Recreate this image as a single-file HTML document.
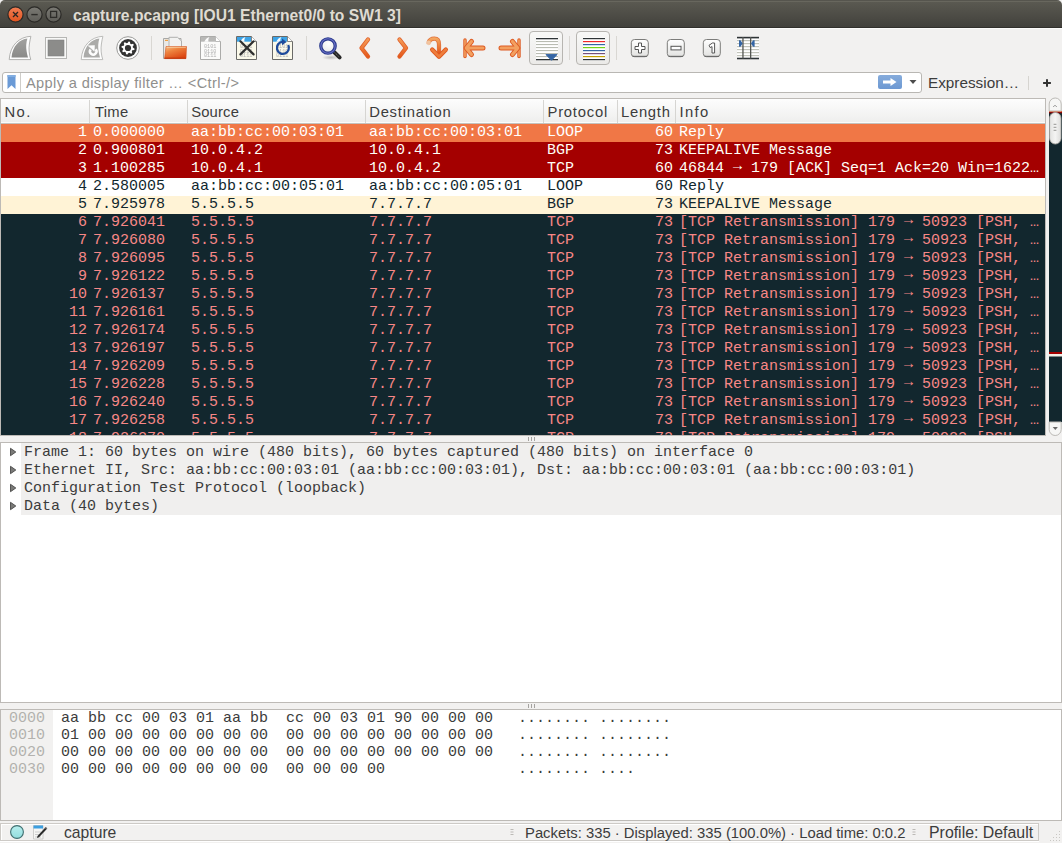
<!DOCTYPE html><html><head><meta charset="utf-8"><style>
*{margin:0;padding:0;box-sizing:border-box}
html,body{width:1062px;height:843px;overflow:hidden;background:#f2f1f0}
body{position:relative;font-family:"Liberation Sans",sans-serif;color:#3c3c3c}
.a{position:absolute}
.mono{font-family:"Liberation Mono",monospace;font-size:15px;white-space:pre}
.ui{font-family:"Liberation Sans",sans-serif;white-space:pre}
svg{position:absolute;overflow:visible}
</style></head><body>
<div class="a" style="left:0;top:0;width:1062px;height:28px;border-radius:5px 5px 0 0;background:linear-gradient(#56554e 0px,#56554e 1px,#68675e 1px,#68675e 2px,#5a5951 2px,#42413c 27px)"></div>
<div class="a" style="left:0;top:27px;width:1062px;height:1px;background:#31302c"></div>
<div class="a" style="left:0;top:28px;width:1062px;height:1px;background:#fbfbfa"></div>
<svg style="left:0;top:0" width="70" height="28">
<defs>
<linearGradient id="gc" x1="0" y1="0" x2="0" y2="1"><stop offset="0" stop-color="#f27e54"/><stop offset="1" stop-color="#e2541f"/></linearGradient>
<linearGradient id="gg" x1="0" y1="0" x2="0" y2="1"><stop offset="0" stop-color="#7b7a74"/><stop offset="1" stop-color="#5e5d58"/></linearGradient>
</defs>
<circle cx="15.5" cy="14.5" r="7.6" fill="url(#gc)" stroke="#2b2a27" stroke-width="1.2"/>
<path d="M13 12 L18 17 M18 12 L13 17" stroke="#2a2522" stroke-width="1.3"/>
<circle cx="34.5" cy="14.5" r="7.6" fill="url(#gg)" stroke="#2b2a27" stroke-width="1.2"/>
<path d="M31.3 14.6 H37.7" stroke="#2e2d2a" stroke-width="1.4"/>
<circle cx="53.5" cy="14.5" r="7.6" fill="url(#gg)" stroke="#2b2a27" stroke-width="1.2"/>
<rect x="50.6" y="11.4" width="6" height="6" fill="none" stroke="#2e2d2a" stroke-width="1.3"/>
</svg>
<div class="a ui" style="left:73px;top:6.5px;font-size:15.67px;font-weight:bold;color:#dfdbd2;line-height:18px">capture.pcapng [IOU1 Ethernet0/0 to SW1 3]</div>
<svg style="left:8px;top:36px" width="24" height="24">
<defs><linearGradient id="fin1" x1="0" y1="0" x2="0" y2="1"><stop offset="0" stop-color="#a2a2a0"/><stop offset="1" stop-color="#8a8a88"/></linearGradient></defs>
<path d="M1.2,23.6 H22.8 C21.2,19 20.6,13 21.4,8 C21.8,5 22.4,2.5 22.9,0.3 C11.5,0.8 2,9 1.2,23.6 Z" fill="#fdfdfd" stroke="#b2b2b0" stroke-width="1"/>
<path d="M3.5,21.4 H20 C18.8,17 18,13 18.2,9 C18.4,6.5 18.8,4.5 19.4,2.6 C11.5,3.3 4.6,10 3.5,21.4 Z" fill="url(#fin1)"/>
</svg>
<svg style="left:44px;top:36px" width="24" height="24">
<rect x="1.5" y="1.5" width="21" height="21" fill="#f9f9f8" stroke="#b6b6b4" stroke-width="1"/>
<rect x="4" y="4" width="16" height="16" fill="#8c8c8a" stroke="#808080" stroke-width="0.6"/>
</svg>
<svg style="left:80px;top:36px" width="24" height="24">
<path d="M1.2,23.6 H22.8 C21.2,19 20.6,13 21.4,8 C21.8,5 22.4,2.5 22.9,0.3 C11.5,0.8 2,9 1.2,23.6 Z" fill="#fdfdfd" stroke="#bcbcba" stroke-width="1"/>
<path d="M3.5,21.4 H20 C18.8,17 18,13 18.2,9 C18.4,6.5 18.8,4.5 19.4,2.6 C11.5,3.3 4.6,10 3.5,21.4 Z" fill="#ababa9"/>
<path d="M15.69,13.21 A3.25,3.25 0 1 1 10.54,13.44" fill="none" stroke="#fdfdfd" stroke-width="2.5"/>
<path d="M8.2,9.8 L14.5,9.5 L14.3,15.3 Z" fill="#fdfdfd" stroke="#fdfdfd" stroke-width="0.5" stroke-linejoin="round"/>
</svg>
<svg style="left:116px;top:36px" width="24" height="24">
<circle cx="12" cy="12" r="11.3" fill="#fcfcfc" stroke="#9c9c9a" stroke-width="1"/>
<circle cx="12" cy="12" r="8.9" fill="#333333"/>
<path d="M12.65,5.43 L13.92,5.68 L14.31,7.68 L15.11,8.21 L17.10,7.81 L17.82,8.89 L16.69,10.58 L16.88,11.52 L18.57,12.65 L18.32,13.92 L16.32,14.31 L15.79,15.11 L16.19,17.10 L15.11,17.82 L13.42,16.69 L12.48,16.88 L11.35,18.57 L10.08,18.32 L9.69,16.32 L8.89,15.79 L6.90,16.19 L6.18,15.11 L7.31,13.42 L7.12,12.48 L5.43,11.35 L5.68,10.08 L7.68,9.69 L8.21,8.89 L7.81,6.90 L8.89,6.18 L10.58,7.31 L11.52,7.12 Z" fill="#ffffff"/>
<circle cx="12" cy="12" r="3.1" fill="#333333"/>
</svg>
<div class="a" style="left:151px;top:36px;width:1px;height:24px;background:#d9d7d3"></div>
<div class="a" style="left:306px;top:36px;width:1px;height:24px;background:#d9d7d3"></div>
<div class="a" style="left:569px;top:36px;width:1px;height:24px;background:#d9d7d3"></div>
<div class="a" style="left:616px;top:36px;width:1px;height:24px;background:#d9d7d3"></div>
<svg style="left:162px;top:36px" width="26" height="24">
<defs><linearGradient id="fold" x1="0" y1="0" x2="0.6" y2="1"><stop offset="0" stop-color="#f6c58c"/><stop offset="0.4" stop-color="#ee8440"/><stop offset="1" stop-color="#dc4612"/></linearGradient>
<linearGradient id="fback" x1="0" y1="0" x2="1" y2="0"><stop offset="0" stop-color="#e6e6e4"/><stop offset="1" stop-color="#fafafa"/></linearGradient></defs>
<path d="M1.5,2.5 H19 V22.5 H1.5 Z" fill="url(#fback)" stroke="#a8a8a6" stroke-width="1"/>
<path d="M3,4.4 H6" stroke="#f0a040" stroke-width="1.2"/>
<path d="M7,1.3 H15.5 L19.5,5 V16 H7 Z" fill="#f2f2f1" stroke="#b0b0ae" stroke-width="1"/>
<path d="M4,10.5 H24.5 L24,22.6 H2.6 Z" fill="url(#fold)" stroke="#d3501e" stroke-width="0.6"/>
<path d="M4.6,11.3 H23.8" stroke="#fbd9b0" stroke-width="0.9" opacity="0.8"/>
<path d="M2.6,22.2 H24" stroke="#c2380e" stroke-width="1.2"/>
</svg>
<svg style="left:200px;top:36px" width="22" height="24">
<path d="M0.5,0.5 H15.5 L20.5,5.5 V23.5 H0.5 Z" fill="#fbfbfa" stroke="#ababa9" stroke-width="1"/>
<path d="M1,1 H15.3 V5.7 H1 Z" fill="#b8b8b6"/>
<path d="M4.3,5.8 C5.3,3.2 6.9,1.6 9.4,0.9 C8.4,2.5 8.1,4 8.5,5.8 Z" fill="#ffffff" opacity="0.95"/>
<path d="M15.5,0.5 V5.5 H20.5" fill="#ffffff" stroke="#ababa9" stroke-width="0.8"/>
<g font-family="Liberation Mono" font-size="5.2" fill="#b0b0ac" style="filter:grayscale(1)"><text x="4" y="12">0101</text><text x="4" y="16.5">0110</text><text x="4" y="21">0111</text></g>

</svg>
<svg style="left:236px;top:36px" width="22" height="24">
<path d="M0.5,0.5 H15.5 L20.5,5.5 V23.5 H0.5 Z" fill="#fbf9ea" stroke="#6a6a68" stroke-width="1"/>
<path d="M1,1 H15.3 V5.7 H1 Z" fill="#3da3e6"/>
<path d="M4.3,5.8 C5.3,3.2 6.9,1.6 9.4,0.9 C8.4,2.5 8.1,4 8.5,5.8 Z" fill="#ffffff" opacity="0.95"/>
<path d="M15.5,0.5 V5.5 H20.5" fill="#ffffff" stroke="#6a6a68" stroke-width="0.8"/>
<g font-family="Liberation Mono" font-size="5.2" fill="#b0b0ac" style="filter:grayscale(1)"><text x="4" y="12">0101</text><text x="4" y="16.5">0110</text><text x="4" y="21">0111</text></g>
<path d="M4.4,5.3 L17.6,18.4 M17.6,5.3 L4.4,18.4" stroke="#2f2f2f" stroke-width="2.2" stroke-linecap="round"/>
</svg>
<svg style="left:272px;top:36px" width="22" height="24">
<path d="M0.5,0.5 H15.5 L20.5,5.5 V23.5 H0.5 Z" fill="#fbf9ea" stroke="#6a6a68" stroke-width="1"/>
<path d="M1,1 H15.3 V5.7 H1 Z" fill="#3da3e6"/>
<path d="M4.3,5.8 C5.3,3.2 6.9,1.6 9.4,0.9 C8.4,2.5 8.1,4 8.5,5.8 Z" fill="#ffffff" opacity="0.95"/>
<path d="M15.5,0.5 V5.5 H20.5" fill="#ffffff" stroke="#6a6a68" stroke-width="0.8"/>
<g font-family="Liberation Mono" font-size="5.2" fill="#b0b0ac" style="filter:grayscale(1)"><text x="4" y="12">0101</text><text x="4" y="16.5">0110</text><text x="4" y="21">0111</text></g>
<path d="M16.2,9 A6,6 0 1 1 10.5,5.9" fill="none" stroke="#1f4b9b" stroke-width="2.3"/><path d="M10,2.6 L14.6,5.9 L10,9.2 Z" fill="#1f4b9b"/>
</svg>
<svg style="left:316px;top:35px" width="28" height="26">
<defs><radialGradient id="lens" cx="0.55" cy="0.35" r="0.7"><stop offset="0" stop-color="#ffffff"/><stop offset="1" stop-color="#e6e6e6"/></radialGradient>
<radialGradient id="shad" cx="0.5" cy="0.5" r="0.5"><stop offset="0" stop-color="#000" stop-opacity="0.22"/><stop offset="1" stop-color="#000" stop-opacity="0"/></radialGradient></defs>
<ellipse cx="15" cy="22.5" rx="9" ry="2.5" fill="url(#shad)"/>
<path d="M18.3,17.3 L23.6,22.4" stroke="#262626" stroke-width="4" stroke-linecap="round"/>
<path d="M18.8,17.6 L23.3,22" stroke="#8a8a80" stroke-width="1" stroke-dasharray="1 1"/>
<circle cx="12" cy="11" r="7.2" fill="url(#lens)" stroke="#2a3a8c" stroke-width="3.3"/>
<circle cx="12" cy="11" r="7.2" fill="none" stroke="#6a70c6" stroke-width="1.1"/>
</svg>
<svg style="left:356px;top:36px" width="18" height="24">
<defs><linearGradient id="och" x1="0" y1="0" x2="0" y2="1"><stop offset="0" stop-color="#f59a56"/><stop offset="1" stop-color="#e55a1c"/></linearGradient></defs>
<path d="M12,3.5 L5.5,12 L12,20.5" fill="none" stroke="#df5f28" stroke-width="4.3" stroke-linecap="round" stroke-linejoin="round"/>
<path d="M12,3.5 L5.5,12 L12,20.5" fill="none" stroke="url(#och)" stroke-width="2.7" stroke-linecap="round" stroke-linejoin="round"/>
</svg>
<svg style="left:394px;top:36px" width="18" height="24">
<path d="M5.5,3.5 L12,12 L5.5,20.5" fill="none" stroke="#df5f28" stroke-width="4.3" stroke-linecap="round" stroke-linejoin="round"/>
<path d="M5.5,3.5 L12,12 L5.5,20.5" fill="none" stroke="url(#och)" stroke-width="2.7" stroke-linecap="round" stroke-linejoin="round"/>
</svg>
<svg style="left:424px;top:34px" width="26" height="26">
<defs><linearGradient id="oca" x1="0" y1="0" x2="0" y2="1"><stop offset="0" stop-color="#f4a660"/><stop offset="1" stop-color="#e4581c"/></linearGradient></defs>
<path d="M4.6,8.6 C5.5,5.5 8,4.6 10.4,4.6 C13.5,4.6 15,7 15,10.5 V19" fill="none" stroke="#e06a30" stroke-width="4.2" stroke-linecap="round" opacity="0.95"/>
<path d="M4.6,8.6 C5.5,5.5 8,4.6 10.4,4.6 C13.5,4.6 15,7 15,10.5 V19" fill="none" stroke="url(#oca)" stroke-width="2.6" stroke-linecap="round"/>
<circle cx="4.6" cy="8.8" r="2.4" fill="#f2d2b4" opacity="0.8"/>
<path d="M8.2,15.6 L15,22.6 L21.8,15.6" fill="none" stroke="#e05a20" stroke-width="4.4" stroke-linecap="round" stroke-linejoin="round"/>
<path d="M8.2,15.6 L15,22.6 L21.8,15.6" fill="none" stroke="#ee7e3c" stroke-width="2.6" stroke-linecap="round" stroke-linejoin="round"/>
</svg>
<svg style="left:460px;top:36px" width="28" height="24">
<path d="M5,4 V20.5" stroke="#dd5a22" stroke-width="3.4" stroke-linecap="round"/>
<path d="M5,4 V20.5" stroke="#f4a060" stroke-width="1.6" stroke-linecap="round"/>
<path d="M11.5,5.5 L6.2,12 L11.5,18.5 M6.5,12 H23" fill="none" stroke="#dd5a22" stroke-width="5" stroke-linecap="round" stroke-linejoin="round"/>
<path d="M11.5,5.5 L6.2,12 L11.5,18.5 M6.5,12 H23" fill="none" stroke="#f3a060" stroke-width="3.1" stroke-linecap="round" stroke-linejoin="round"/>
</svg>
<svg style="left:496px;top:36px" width="28" height="24">
<path d="M23,4 V20.5" stroke="#dd5a22" stroke-width="3.4" stroke-linecap="round"/>
<path d="M23,4 V20.5" stroke="#f4a060" stroke-width="1.6" stroke-linecap="round"/>
<path d="M16.5,5.5 L21.8,12 L16.5,18.5 M21.5,12 H5" fill="none" stroke="#dd5a22" stroke-width="5" stroke-linecap="round" stroke-linejoin="round"/>
<path d="M16.5,5.5 L21.8,12 L16.5,18.5 M21.5,12 H5" fill="none" stroke="#f3a060" stroke-width="3.1" stroke-linecap="round" stroke-linejoin="round"/>
</svg>
<div class="a" style="left:529px;top:31px;width:34px;height:34px;border:1px solid #b7b5b1;border-radius:4px;background:linear-gradient(#f8f8f7,#ebeae8)"></div>
<svg style="left:535px;top:36px" width="24" height="26"><rect x="1" y="1.5" width="22" height="23" fill="#ffffff"/><rect x="1" y="2" width="22" height="1.3" fill="#2e3436"/><rect x="1" y="5" width="22" height="1.1" fill="#b9bcb2"/><rect x="1" y="8" width="22" height="1.1" fill="#b9bcb2"/><rect x="1" y="11" width="22" height="1.1" fill="#b9bcb2"/><rect x="1" y="14" width="22" height="1.1" fill="#b9bcb2"/><rect x="1" y="17" width="22" height="1.1" fill="#b9bcb2"/><rect x="1" y="20" width="22" height="1.1" fill="#b9bcb2"/><rect x="1" y="23" width="22" height="1.3" fill="#2e3436"/><path d="M11,18.6 H22 L16.5,24.3 Z" fill="#3465a4" stroke="#3465a4" stroke-width="1" stroke-linejoin="round"/></svg>
<div class="a" style="left:576px;top:31px;width:34px;height:34px;border:1px solid #b7b5b1;border-radius:4px;background:linear-gradient(#f8f8f7,#ebeae8)"></div>
<svg style="left:582px;top:36px" width="24" height="26"><rect x="1" y="1.5" width="22" height="23" fill="#ffffff"/><rect x="1" y="2" width="22" height="1.2" fill="#2e3436"/><rect x="1" y="5" width="22" height="1.2" fill="#ef2929"/><rect x="1" y="8" width="22" height="1.2" fill="#3465a4"/><rect x="1" y="11" width="22" height="1.2" fill="#73d216"/><rect x="1" y="14" width="22" height="1.2" fill="#3465a4"/><rect x="1" y="17" width="22" height="1.2" fill="#75507b"/><rect x="1" y="20" width="22" height="1.2" fill="#c4a000"/><rect x="1" y="23" width="22" height="1.2" fill="#2e3436"/></svg>
<svg style="left:630px;top:38px" width="20" height="20">
<defs><linearGradient id="zb630" x1="0" y1="0" x2="0" y2="1"><stop offset="0" stop-color="#ffffff"/><stop offset="1" stop-color="#e2e2e0"/></linearGradient></defs>
<rect x="1.3" y="1.5" width="17" height="17.2" rx="3.2" fill="url(#zb630)" stroke="#7c7c7a" stroke-width="1"/>
<path d="M2.5,18.3 H17" stroke="#555" stroke-width="0.8"/>
<path d="M8.5,5 H11.5 V8.5 H15 V11.5 H11.5 V15 H8.5 V11.5 H5 V8.5 H8.5 Z" fill="#fff" stroke="#555" stroke-width="1"/>
</svg>
<svg style="left:666px;top:38px" width="20" height="20">
<defs><linearGradient id="zb666" x1="0" y1="0" x2="0" y2="1"><stop offset="0" stop-color="#ffffff"/><stop offset="1" stop-color="#e2e2e0"/></linearGradient></defs>
<rect x="1.3" y="1.5" width="17" height="17.2" rx="3.2" fill="url(#zb666)" stroke="#7c7c7a" stroke-width="1"/>
<path d="M2.5,18.3 H17" stroke="#555" stroke-width="0.8"/>
<rect x="5" y="8.3" width="10" height="3.6" fill="#fff" stroke="#555" stroke-width="1"/>
</svg>
<svg style="left:702px;top:38px" width="20" height="20">
<defs><linearGradient id="zb702" x1="0" y1="0" x2="0" y2="1"><stop offset="0" stop-color="#ffffff"/><stop offset="1" stop-color="#e2e2e0"/></linearGradient></defs>
<rect x="1.3" y="1.5" width="17" height="17.2" rx="3.2" fill="url(#zb702)" stroke="#7c7c7a" stroke-width="1"/>
<path d="M2.5,18.3 H17" stroke="#555" stroke-width="0.8"/>
<path d="M7,7.3 L10.4,5 H12.6 V15 H10 V8.6 L8.2,9.6 Z" fill="#fff" stroke="#555" stroke-width="1" stroke-linejoin="round"/>
</svg>
<svg style="left:736px;top:36px" width="24" height="24"><rect x="1" y="1" width="22" height="22" fill="#ffffff"/><rect x="1" y="4" width="22" height="1.2" fill="#c2c4ba"/><rect x="1" y="7" width="22" height="1.2" fill="#c2c4ba"/><rect x="1" y="10" width="22" height="1.2" fill="#c2c4ba"/><rect x="1" y="13" width="22" height="1.2" fill="#c2c4ba"/><rect x="1" y="16" width="22" height="1.2" fill="#c2c4ba"/><rect x="1" y="19" width="22" height="1.2" fill="#c2c4ba"/><rect x="1" y="0.8" width="22" height="1.6" fill="#2e3436"/><rect x="1" y="21.7" width="22" height="1.6" fill="#2e3436"/><rect x="6.3" y="1" width="1.3" height="21.5" fill="#555753"/><rect x="14" y="1" width="1.3" height="21.5" fill="#555753"/><path d="M3,4.2 H4.5 L6.6,7.5 L4.5,10.8 H3 Z" fill="#3465a4"/><path d="M18.6,4.2 H17.1 L15,7.5 L17.1,10.8 H18.6 Z" fill="#3465a4"/></svg>
<div class="a" style="left:2px;top:72px;width:920px;height:21px;background:#fff;border:1px solid #b9b7b3;border-radius:3px"></div>
<div class="a" style="left:20px;top:73px;width:1px;height:19px;background:#cfcdc9"></div>
<svg style="left:6px;top:74px" width="12" height="17"><path d="M1.5,1 H9.5 V15 L5.5,11.2 L1.5,15 Z" fill="#6a9ad6"/><path d="M1.5,1 H9.5 V3 H1.5Z" fill="#82aee2"/></svg>
<div class="a ui" style="left:26px;top:74px;font-size:14.6px;letter-spacing:0.37px;line-height:18px;color:#8f8f8d">Apply a display filter … &lt;Ctrl-/&gt;</div>
<svg style="left:877px;top:74px" width="26" height="16"><defs><linearGradient id="ab" x1="0" y1="0" x2="0" y2="1"><stop offset="0" stop-color="#86acdc"/><stop offset="1" stop-color="#6c98d2"/></linearGradient></defs><rect x="1" y="1" width="24" height="14" rx="2" fill="url(#ab)"/><path d="M6,6.6 H13.5 V4 L19.5,8 L13.5,12 V9.4 H6 Z" fill="#ffffff"/></svg>
<svg style="left:908px;top:78px" width="10" height="8"><path d="M1.5,2 H8.5 L5,6 Z" fill="#4c4c4c"/></svg>
<div class="a ui" style="left:928px;top:74px;font-size:15.3px;line-height:18px;color:#3c3c3c">Expression…</div>
<div class="a" style="left:1028px;top:76px;width:1px;height:14px;background:#d6d4d0"></div>
<svg style="left:1040px;top:76px" width="14" height="14"><path d="M7,3.2 V10.8 M3.1,7 H10.9" stroke="#333" stroke-width="2"/></svg>
<div class="a" style="left:0;top:98px;width:1046px;height:338px;border:1px solid #bdbab6;background:#12272e"></div>
<div class="a" style="left:1px;top:99px;width:1044px;height:24px;background:linear-gradient(#fdfdfd,#eeeeed)"></div>
<div class="a" style="left:1px;top:123px;width:1044px;height:1px;background:#c4c2be"></div>
<div class="a" style="left:1px;top:122px;width:1044px;height:1px;background:#fbfbfa"></div>
<div class="a" style="left:89px;top:100px;width:1px;height:23px;background:#d6d5d2"></div>
<div class="a ui" style="left:4.5px;top:103px;font-size:14.8px;letter-spacing:1.4px;line-height:18px;color:#3c3c3c">No.</div>
<div class="a" style="left:187px;top:100px;width:1px;height:23px;background:#d6d5d2"></div>
<div class="a ui" style="left:95px;top:103px;font-size:14.8px;letter-spacing:0.27px;line-height:18px;color:#3c3c3c">Time</div>
<div class="a" style="left:365px;top:100px;width:1px;height:23px;background:#d6d5d2"></div>
<div class="a ui" style="left:191.2px;top:103px;font-size:14.8px;letter-spacing:0.16px;line-height:18px;color:#3c3c3c">Source</div>
<div class="a" style="left:543px;top:100px;width:1px;height:23px;background:#d6d5d2"></div>
<div class="a ui" style="left:369.2px;top:103px;font-size:14.8px;letter-spacing:0.76px;line-height:18px;color:#3c3c3c">Destination</div>
<div class="a" style="left:617px;top:100px;width:1px;height:23px;background:#d6d5d2"></div>
<div class="a ui" style="left:547.5px;top:103px;font-size:14.8px;letter-spacing:0.77px;line-height:18px;color:#3c3c3c">Protocol</div>
<div class="a" style="left:675px;top:100px;width:1px;height:23px;background:#d6d5d2"></div>
<div class="a ui" style="left:621px;top:103px;font-size:14.8px;letter-spacing:0.72px;line-height:18px;color:#3c3c3c">Length</div>
<div class="a ui" style="left:679.5px;top:103px;font-size:14.8px;letter-spacing:1.33px;line-height:18px;color:#3c3c3c">Info</div>
<div class="a" style="left:1px;top:124px;width:1044px;height:311px;overflow:hidden">
<div class="a" style="left:0;top:0px;width:1044px;height:18px;background:#f07746;color:#ffffff">
<div class="a mono" style="right:958px;top:0px;line-height:18px">1</div>
<div class="a mono" style="left:92px;top:0px;line-height:18px">0.000000</div>
<div class="a mono" style="left:190px;top:0px;line-height:18px">aa:bb:cc:00:03:01</div>
<div class="a mono" style="left:368px;top:0px;line-height:18px">aa:bb:cc:00:03:01</div>
<div class="a mono" style="left:546px;top:0px;line-height:18px">LOOP</div>
<div class="a mono" style="right:372px;top:0px;line-height:18px">60</div>
<div class="a mono" style="left:678px;top:0px;line-height:18px">Reply</div>
</div>
<div class="a" style="left:0;top:18px;width:1044px;height:18px;background:#a40000;color:#fffef6">
<div class="a mono" style="right:958px;top:0px;line-height:18px">2</div>
<div class="a mono" style="left:92px;top:0px;line-height:18px">0.900801</div>
<div class="a mono" style="left:190px;top:0px;line-height:18px">10.0.4.2</div>
<div class="a mono" style="left:368px;top:0px;line-height:18px">10.0.4.1</div>
<div class="a mono" style="left:546px;top:0px;line-height:18px">BGP</div>
<div class="a mono" style="right:372px;top:0px;line-height:18px">73</div>
<div class="a mono" style="left:678px;top:0px;line-height:18px">KEEPALIVE Message</div>
</div>
<div class="a" style="left:0;top:36px;width:1044px;height:18px;background:#a40000;color:#fffef6">
<div class="a mono" style="right:958px;top:0px;line-height:18px">3</div>
<div class="a mono" style="left:92px;top:0px;line-height:18px">1.100285</div>
<div class="a mono" style="left:190px;top:0px;line-height:18px">10.0.4.1</div>
<div class="a mono" style="left:368px;top:0px;line-height:18px">10.0.4.2</div>
<div class="a mono" style="left:546px;top:0px;line-height:18px">TCP</div>
<div class="a mono" style="right:372px;top:0px;line-height:18px">60</div>
<div class="a mono" style="left:678px;top:0px;line-height:18px">46844 <span style="position:relative;top:-2px">→</span> 179 [ACK] Seq=1 Ack=20 Win=1622…</div>
</div>
<div class="a" style="left:0;top:54px;width:1044px;height:18px;background:#ffffff;color:#12272e">
<div class="a mono" style="right:958px;top:0px;line-height:18px">4</div>
<div class="a mono" style="left:92px;top:0px;line-height:18px">2.580005</div>
<div class="a mono" style="left:190px;top:0px;line-height:18px">aa:bb:cc:00:05:01</div>
<div class="a mono" style="left:368px;top:0px;line-height:18px">aa:bb:cc:00:05:01</div>
<div class="a mono" style="left:546px;top:0px;line-height:18px">LOOP</div>
<div class="a mono" style="right:372px;top:0px;line-height:18px">60</div>
<div class="a mono" style="left:678px;top:0px;line-height:18px">Reply</div>
</div>
<div class="a" style="left:0;top:72px;width:1044px;height:18px;background:#fff3d6;color:#12272e">
<div class="a mono" style="right:958px;top:0px;line-height:18px">5</div>
<div class="a mono" style="left:92px;top:0px;line-height:18px">7.925978</div>
<div class="a mono" style="left:190px;top:0px;line-height:18px">5.5.5.5</div>
<div class="a mono" style="left:368px;top:0px;line-height:18px">7.7.7.7</div>
<div class="a mono" style="left:546px;top:0px;line-height:18px">BGP</div>
<div class="a mono" style="right:372px;top:0px;line-height:18px">73</div>
<div class="a mono" style="left:678px;top:0px;line-height:18px">KEEPALIVE Message</div>
</div>
<div class="a" style="left:0;top:90px;width:1044px;height:18px;background:#12272e;color:#f78787">
<div class="a mono" style="right:958px;top:0px;line-height:18px">6</div>
<div class="a mono" style="left:92px;top:0px;line-height:18px">7.926041</div>
<div class="a mono" style="left:190px;top:0px;line-height:18px">5.5.5.5</div>
<div class="a mono" style="left:368px;top:0px;line-height:18px">7.7.7.7</div>
<div class="a mono" style="left:546px;top:0px;line-height:18px">TCP</div>
<div class="a mono" style="right:372px;top:0px;line-height:18px">73</div>
<div class="a mono" style="left:678px;top:0px;line-height:18px">[TCP Retransmission] 179 <span style="position:relative;top:-2px">→</span> 50923 [PSH, …</div>
</div>
<div class="a" style="left:0;top:108px;width:1044px;height:18px;background:#12272e;color:#f78787">
<div class="a mono" style="right:958px;top:0px;line-height:18px">7</div>
<div class="a mono" style="left:92px;top:0px;line-height:18px">7.926080</div>
<div class="a mono" style="left:190px;top:0px;line-height:18px">5.5.5.5</div>
<div class="a mono" style="left:368px;top:0px;line-height:18px">7.7.7.7</div>
<div class="a mono" style="left:546px;top:0px;line-height:18px">TCP</div>
<div class="a mono" style="right:372px;top:0px;line-height:18px">73</div>
<div class="a mono" style="left:678px;top:0px;line-height:18px">[TCP Retransmission] 179 <span style="position:relative;top:-2px">→</span> 50923 [PSH, …</div>
</div>
<div class="a" style="left:0;top:126px;width:1044px;height:18px;background:#12272e;color:#f78787">
<div class="a mono" style="right:958px;top:0px;line-height:18px">8</div>
<div class="a mono" style="left:92px;top:0px;line-height:18px">7.926095</div>
<div class="a mono" style="left:190px;top:0px;line-height:18px">5.5.5.5</div>
<div class="a mono" style="left:368px;top:0px;line-height:18px">7.7.7.7</div>
<div class="a mono" style="left:546px;top:0px;line-height:18px">TCP</div>
<div class="a mono" style="right:372px;top:0px;line-height:18px">73</div>
<div class="a mono" style="left:678px;top:0px;line-height:18px">[TCP Retransmission] 179 <span style="position:relative;top:-2px">→</span> 50923 [PSH, …</div>
</div>
<div class="a" style="left:0;top:144px;width:1044px;height:18px;background:#12272e;color:#f78787">
<div class="a mono" style="right:958px;top:0px;line-height:18px">9</div>
<div class="a mono" style="left:92px;top:0px;line-height:18px">7.926122</div>
<div class="a mono" style="left:190px;top:0px;line-height:18px">5.5.5.5</div>
<div class="a mono" style="left:368px;top:0px;line-height:18px">7.7.7.7</div>
<div class="a mono" style="left:546px;top:0px;line-height:18px">TCP</div>
<div class="a mono" style="right:372px;top:0px;line-height:18px">73</div>
<div class="a mono" style="left:678px;top:0px;line-height:18px">[TCP Retransmission] 179 <span style="position:relative;top:-2px">→</span> 50923 [PSH, …</div>
</div>
<div class="a" style="left:0;top:162px;width:1044px;height:18px;background:#12272e;color:#f78787">
<div class="a mono" style="right:958px;top:0px;line-height:18px">10</div>
<div class="a mono" style="left:92px;top:0px;line-height:18px">7.926137</div>
<div class="a mono" style="left:190px;top:0px;line-height:18px">5.5.5.5</div>
<div class="a mono" style="left:368px;top:0px;line-height:18px">7.7.7.7</div>
<div class="a mono" style="left:546px;top:0px;line-height:18px">TCP</div>
<div class="a mono" style="right:372px;top:0px;line-height:18px">73</div>
<div class="a mono" style="left:678px;top:0px;line-height:18px">[TCP Retransmission] 179 <span style="position:relative;top:-2px">→</span> 50923 [PSH, …</div>
</div>
<div class="a" style="left:0;top:180px;width:1044px;height:18px;background:#12272e;color:#f78787">
<div class="a mono" style="right:958px;top:0px;line-height:18px">11</div>
<div class="a mono" style="left:92px;top:0px;line-height:18px">7.926161</div>
<div class="a mono" style="left:190px;top:0px;line-height:18px">5.5.5.5</div>
<div class="a mono" style="left:368px;top:0px;line-height:18px">7.7.7.7</div>
<div class="a mono" style="left:546px;top:0px;line-height:18px">TCP</div>
<div class="a mono" style="right:372px;top:0px;line-height:18px">73</div>
<div class="a mono" style="left:678px;top:0px;line-height:18px">[TCP Retransmission] 179 <span style="position:relative;top:-2px">→</span> 50923 [PSH, …</div>
</div>
<div class="a" style="left:0;top:198px;width:1044px;height:18px;background:#12272e;color:#f78787">
<div class="a mono" style="right:958px;top:0px;line-height:18px">12</div>
<div class="a mono" style="left:92px;top:0px;line-height:18px">7.926174</div>
<div class="a mono" style="left:190px;top:0px;line-height:18px">5.5.5.5</div>
<div class="a mono" style="left:368px;top:0px;line-height:18px">7.7.7.7</div>
<div class="a mono" style="left:546px;top:0px;line-height:18px">TCP</div>
<div class="a mono" style="right:372px;top:0px;line-height:18px">73</div>
<div class="a mono" style="left:678px;top:0px;line-height:18px">[TCP Retransmission] 179 <span style="position:relative;top:-2px">→</span> 50923 [PSH, …</div>
</div>
<div class="a" style="left:0;top:216px;width:1044px;height:18px;background:#12272e;color:#f78787">
<div class="a mono" style="right:958px;top:0px;line-height:18px">13</div>
<div class="a mono" style="left:92px;top:0px;line-height:18px">7.926197</div>
<div class="a mono" style="left:190px;top:0px;line-height:18px">5.5.5.5</div>
<div class="a mono" style="left:368px;top:0px;line-height:18px">7.7.7.7</div>
<div class="a mono" style="left:546px;top:0px;line-height:18px">TCP</div>
<div class="a mono" style="right:372px;top:0px;line-height:18px">73</div>
<div class="a mono" style="left:678px;top:0px;line-height:18px">[TCP Retransmission] 179 <span style="position:relative;top:-2px">→</span> 50923 [PSH, …</div>
</div>
<div class="a" style="left:0;top:234px;width:1044px;height:18px;background:#12272e;color:#f78787">
<div class="a mono" style="right:958px;top:0px;line-height:18px">14</div>
<div class="a mono" style="left:92px;top:0px;line-height:18px">7.926209</div>
<div class="a mono" style="left:190px;top:0px;line-height:18px">5.5.5.5</div>
<div class="a mono" style="left:368px;top:0px;line-height:18px">7.7.7.7</div>
<div class="a mono" style="left:546px;top:0px;line-height:18px">TCP</div>
<div class="a mono" style="right:372px;top:0px;line-height:18px">73</div>
<div class="a mono" style="left:678px;top:0px;line-height:18px">[TCP Retransmission] 179 <span style="position:relative;top:-2px">→</span> 50923 [PSH, …</div>
</div>
<div class="a" style="left:0;top:252px;width:1044px;height:18px;background:#12272e;color:#f78787">
<div class="a mono" style="right:958px;top:0px;line-height:18px">15</div>
<div class="a mono" style="left:92px;top:0px;line-height:18px">7.926228</div>
<div class="a mono" style="left:190px;top:0px;line-height:18px">5.5.5.5</div>
<div class="a mono" style="left:368px;top:0px;line-height:18px">7.7.7.7</div>
<div class="a mono" style="left:546px;top:0px;line-height:18px">TCP</div>
<div class="a mono" style="right:372px;top:0px;line-height:18px">73</div>
<div class="a mono" style="left:678px;top:0px;line-height:18px">[TCP Retransmission] 179 <span style="position:relative;top:-2px">→</span> 50923 [PSH, …</div>
</div>
<div class="a" style="left:0;top:270px;width:1044px;height:18px;background:#12272e;color:#f78787">
<div class="a mono" style="right:958px;top:0px;line-height:18px">16</div>
<div class="a mono" style="left:92px;top:0px;line-height:18px">7.926240</div>
<div class="a mono" style="left:190px;top:0px;line-height:18px">5.5.5.5</div>
<div class="a mono" style="left:368px;top:0px;line-height:18px">7.7.7.7</div>
<div class="a mono" style="left:546px;top:0px;line-height:18px">TCP</div>
<div class="a mono" style="right:372px;top:0px;line-height:18px">73</div>
<div class="a mono" style="left:678px;top:0px;line-height:18px">[TCP Retransmission] 179 <span style="position:relative;top:-2px">→</span> 50923 [PSH, …</div>
</div>
<div class="a" style="left:0;top:288px;width:1044px;height:18px;background:#12272e;color:#f78787">
<div class="a mono" style="right:958px;top:0px;line-height:18px">17</div>
<div class="a mono" style="left:92px;top:0px;line-height:18px">7.926258</div>
<div class="a mono" style="left:190px;top:0px;line-height:18px">5.5.5.5</div>
<div class="a mono" style="left:368px;top:0px;line-height:18px">7.7.7.7</div>
<div class="a mono" style="left:546px;top:0px;line-height:18px">TCP</div>
<div class="a mono" style="right:372px;top:0px;line-height:18px">73</div>
<div class="a mono" style="left:678px;top:0px;line-height:18px">[TCP Retransmission] 179 <span style="position:relative;top:-2px">→</span> 50923 [PSH, …</div>
</div>
<div class="a" style="left:0;top:306px;width:1044px;height:18px;background:#12272e;color:#f78787">
<div class="a mono" style="right:958px;top:0px;line-height:18px">18</div>
<div class="a mono" style="left:92px;top:0px;line-height:18px">7.926270</div>
<div class="a mono" style="left:190px;top:0px;line-height:18px">5.5.5.5</div>
<div class="a mono" style="left:368px;top:0px;line-height:18px">7.7.7.7</div>
<div class="a mono" style="left:546px;top:0px;line-height:18px">TCP</div>
<div class="a mono" style="right:372px;top:0px;line-height:18px">73</div>
<div class="a mono" style="left:678px;top:0px;line-height:18px">[TCP Retransmission] 179 <span style="position:relative;top:-2px">→</span> 50923 [PSH, …</div>
</div>
</div>
<svg style="left:1048px;top:98px" width="14" height="338">
<defs><linearGradient id="sbt" x1="0" y1="0" x2="1" y2="0"><stop offset="0" stop-color="#e2e2e0"/><stop offset="0.5" stop-color="#f4f4f3"/><stop offset="1" stop-color="#dcdcda"/></linearGradient></defs>
<rect x="1" y="13" width="13" height="311" fill="#12272e"/>
<rect x="1" y="13" width="13" height="1.2" fill="#e06030"/>
<rect x="1" y="14.2" width="13" height="1" fill="#a40000"/>
<rect x="1" y="254" width="13" height="2" fill="#a40000"/>
<rect x="1" y="256" width="13" height="2.5" fill="#f2efe6"/>
<path d="M1.2,13 V6 A6,6 0 0 1 13.2,6 V13 Z" fill="#f6f6f5" stroke="#bcbab6" stroke-width="1"/>
<path d="M5.2,9 L7,7.2 L8.8,9" fill="none" stroke="#888" stroke-width="0.9"/>
<path d="M1.2,324 V331.5 A6,6 0 0 0 13.2,331.5 V324 Z" fill="#f6f6f5" stroke="#bcbab6" stroke-width="1"/>
<path d="M4.7,329 H9.9 L7.3,332 Z" fill="#6a6a6a"/>
<rect x="1.6" y="14.5" width="11.4" height="31.5" rx="5.7" fill="url(#sbt)" stroke="#a9a7a3" stroke-width="0.9"/>
<path d="M5.6,26.3 H8.4 M5.6,29.3 H8.4 M5.6,32.3 H8.4" stroke="#8a8a88" stroke-width="0.9"/>
</svg>
<div class="a" style="left:0;top:442px;width:1062px;height:261px;border:1px solid #bdbab6;background:#fff"></div>
<svg style="left:526px;top:436px" width="12" height="6"><path d="M2.5,1 V5 M5.5,1 V5 M8.5,1 V5" stroke="#a5a3a0" stroke-width="1"/></svg>
<div class="a" style="left:21px;top:443px;width:1040px;height:72px;background:#f0efee"></div>
<svg style="left:9px;top:447px" width="9" height="10"><path d="M1.5,1.3 L6.8,5 L1.5,8.7 Z" fill="#7a7a78" stroke="#4a4a48" stroke-width="0.9" stroke-linejoin="round"/></svg>
<div class="a mono" style="left:24px;top:444px;line-height:18px;color:#3c3c3c">Frame 1: 60 bytes on wire (480 bits), 60 bytes captured (480 bits) on interface 0</div>
<svg style="left:9px;top:465px" width="9" height="10"><path d="M1.5,1.3 L6.8,5 L1.5,8.7 Z" fill="#7a7a78" stroke="#4a4a48" stroke-width="0.9" stroke-linejoin="round"/></svg>
<div class="a mono" style="left:24px;top:462px;line-height:18px;color:#3c3c3c">Ethernet II, Src: aa:bb:cc:00:03:01 (aa:bb:cc:00:03:01), Dst: aa:bb:cc:00:03:01 (aa:bb:cc:00:03:01)</div>
<svg style="left:9px;top:483px" width="9" height="10"><path d="M1.5,1.3 L6.8,5 L1.5,8.7 Z" fill="#7a7a78" stroke="#4a4a48" stroke-width="0.9" stroke-linejoin="round"/></svg>
<div class="a mono" style="left:24px;top:480px;line-height:18px;color:#3c3c3c">Configuration Test Protocol (loopback)</div>
<svg style="left:9px;top:501px" width="9" height="10"><path d="M1.5,1.3 L6.8,5 L1.5,8.7 Z" fill="#7a7a78" stroke="#4a4a48" stroke-width="0.9" stroke-linejoin="round"/></svg>
<div class="a mono" style="left:24px;top:498px;line-height:18px;color:#3c3c3c">Data (40 bytes)</div>
<svg style="left:526px;top:703px" width="12" height="6"><path d="M2.5,1 V5 M5.5,1 V5 M8.5,1 V5" stroke="#a5a3a0" stroke-width="1"/></svg>
<div class="a" style="left:0;top:709px;width:1062px;height:112px;border:1px solid #bdbab6;background:#fff"></div>
<div class="a" style="left:1px;top:710px;width:52px;height:110px;background:#f2f1f0"></div>
<div class="a mono" style="left:9px;top:710px;line-height:18px;color:#b3b1ae">0000</div>
<div class="a mono" style="left:61px;top:710px;line-height:18px;color:#3c3c3c">aa bb cc 00 03 01 aa bb  cc 00 03 01 90 00 00 00</div>
<div class="a mono" style="left:518px;top:710px;line-height:18px;color:#3c3c3c">........ ........</div>
<div class="a mono" style="left:9px;top:727px;line-height:18px;color:#b3b1ae">0010</div>
<div class="a mono" style="left:61px;top:727px;line-height:18px;color:#3c3c3c">01 00 00 00 00 00 00 00  00 00 00 00 00 00 00 00</div>
<div class="a mono" style="left:518px;top:727px;line-height:18px;color:#3c3c3c">........ ........</div>
<div class="a mono" style="left:9px;top:744px;line-height:18px;color:#b3b1ae">0020</div>
<div class="a mono" style="left:61px;top:744px;line-height:18px;color:#3c3c3c">00 00 00 00 00 00 00 00  00 00 00 00 00 00 00 00</div>
<div class="a mono" style="left:518px;top:744px;line-height:18px;color:#3c3c3c">........ ........</div>
<div class="a mono" style="left:9px;top:761px;line-height:18px;color:#b3b1ae">0030</div>
<div class="a mono" style="left:61px;top:761px;line-height:18px;color:#3c3c3c">00 00 00 00 00 00 00 00  00 00 00 00</div>
<div class="a mono" style="left:518px;top:761px;line-height:18px;color:#3c3c3c">........ ....</div>
<div class="a" style="left:0;top:823px;width:1039px;height:18px;border:1px solid #cdcac6;box-shadow:inset 1px 1px 0 #ffffff, 0 1px 0 #ffffff"></div>
<svg style="left:9px;top:824px" width="16" height="16"><defs><linearGradient id="led" x1="0" y1="0" x2="0" y2="1"><stop offset="0" stop-color="#b8eeee"/><stop offset="1" stop-color="#92dede"/></linearGradient></defs><circle cx="8" cy="8" r="6.4" fill="url(#led)" stroke="#3f6f70" stroke-width="1.1"/></svg>
<svg style="left:32px;top:824px" width="17" height="16">
<path d="M1.5,1.5 H11 V15 H1.5 Z" fill="#f6f6f4" stroke="#c4c4c2" stroke-width="0.8"/>
<path d="M1.5,1.5 H11 V4.5 H1.5 Z" fill="#3d9fe0"/>
<path d="M3,8 H9 M3,10.5 H9 M3,13 H9" stroke="#bbb" stroke-width="0.7"/>
<path d="M5.5,12 L13.8,3 L15.3,4.5 L7,13.2 L5,14 Z" fill="#2a2a2a"/>
<path d="M13.2,3.6 L14.7,5.1" stroke="#aaa" stroke-width="0.8"/>
</svg>
<div class="a ui" style="left:64px;top:824px;font-size:15.7px;line-height:18px;color:#3c3c3c">capture</div>
<svg style="left:510px;top:827px" width="5" height="12"><path d="M0.5,2.5 H3.5 M0.5,5 H3.5 M0.5,7.5 H3.5" stroke="#b5b3af" stroke-width="0.9"/></svg>
<svg style="left:912px;top:827px" width="5" height="12"><path d="M0.5,2.5 H3.5 M0.5,5 H3.5 M0.5,7.5 H3.5" stroke="#b5b3af" stroke-width="0.9"/></svg>
<div class="a ui" style="left:525px;top:824px;font-size:14.82px;line-height:18px;color:#3c3c3c">Packets: 335 · Displayed: 335 (100.0%) · Load time: 0:0.2</div>
<div class="a ui" style="left:929px;top:824px;font-size:15.88px;line-height:18px;color:#3c3c3c">Profile: Default</div>
<svg style="left:1048px;top:828px" width="14" height="15"><rect x="11" y="3" width="1" height="1" fill="#c9c7c3"/><rect x="8" y="6" width="1" height="1" fill="#c9c7c3"/><rect x="11" y="6" width="1" height="1" fill="#c9c7c3"/><rect x="5" y="9" width="1" height="1" fill="#c9c7c3"/><rect x="8" y="9" width="1" height="1" fill="#c9c7c3"/><rect x="11" y="9" width="1" height="1" fill="#c9c7c3"/><rect x="2" y="12" width="1" height="1" fill="#c9c7c3"/><rect x="5" y="12" width="1" height="1" fill="#c9c7c3"/><rect x="8" y="12" width="1" height="1" fill="#c9c7c3"/><rect x="11" y="12" width="1" height="1" fill="#c9c7c3"/></svg>
</body></html>
